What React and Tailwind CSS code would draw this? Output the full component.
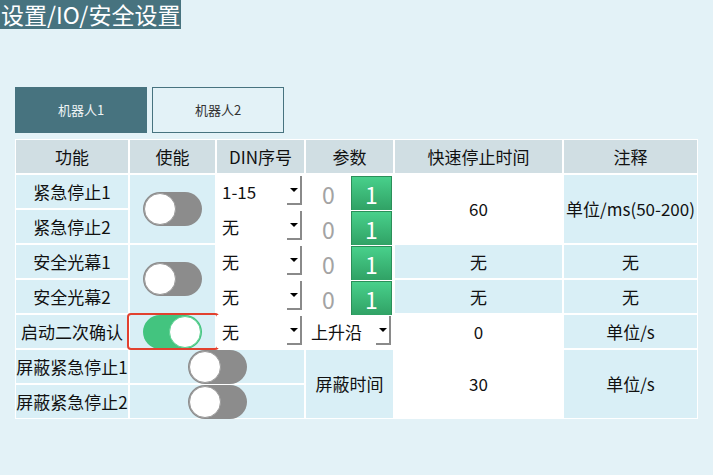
const cell = 'flex items-center justify-center bg-[#d9eff6] text-[17px] text-[#111]'
const head = 'flex items-center justify-center bg-[#d0dee3] text-[17px] text-[#111]'

function Toggle({ on }) {
  return (
    <div className={`relative w-[59px] h-[34px] rounded-full ${on ? 'bg-[#43c47f]' : 'bg-[#8c8c8c]'}`}>
      <div className={`absolute top-[1px] w-[32px] h-[32px] rounded-full bg-white border ${on ? 'right-[1px] border-[#5fd193]' : 'left-[1px] border-[#9a9a9a]'}`} />
    </div>
  )
}

function Select({ value }) {
  return (
    <div className="relative flex items-center bg-white text-[17px] text-[#111] pl-[5px]">
      {value}
      <div className="absolute right-[2px] top-[1px] bottom-[3px] w-[15px] flex items-center justify-center border-r-2 border-b-2 border-[#8a8a8a]">
        <div className="w-0 h-0 border-l-[4px] border-r-[4px] border-t-[4px] border-l-transparent border-r-transparent border-t-black" />
      </div>
    </div>
  )
}

function Param() {
  return (
    <div className="flex bg-white">
      <div className="flex-1 flex items-center justify-center text-[23px] text-[#a3a3a3]">0</div>
      <div className="w-[41px] my-[1px] mr-[1px] flex items-center justify-center text-[23px] text-white bg-gradient-to-b from-[#48d08b] to-[#2f9f63] border border-[#2b8f59]">1</div>
    </div>
  )
}

export default function App() {
  return (
    <div className="w-[713px] h-[475px] bg-[#e3f2f7] font-['Noto_Sans_CJK_SC',sans-serif] overflow-hidden">
      {/* Title */}
      <div className="w-fit h-[29px] bg-[#47737f] text-white text-[23px] leading-[29px] px-[1px] whitespace-nowrap">
        设置/IO/安全设置
      </div>

      {/* Tabs */}
      <div className="flex gap-[5px] ml-[15px] mt-[58px]">
        <div className="w-[132px] h-[46px] flex items-center justify-center bg-[#47737f] text-[13px] text-[#eef4f5]">机器人1</div>
        <div className="w-[132px] h-[46px] flex items-center justify-center border border-[#47737f] text-[13px] text-[#333]">机器人2</div>
      </div>

      {/* Table */}
      <div className="ml-[15px] mt-[6px] w-fit bg-white p-[1px] grid grid-cols-[112px_85px_87px_87px_167px_133px] grid-rows-[repeat(8,33px)] gap-[2px]">
        <div className={`${head} col-start-1 row-start-1`}>功能</div>
        <div className={`${head} col-start-2 row-start-1`}>使能</div>
        <div className={`${head} col-start-3 row-start-1`}>DIN序号</div>
        <div className={`${head} col-start-4 row-start-1`}>参数</div>
        <div className={`${head} col-start-5 row-start-1`}>快速停止时间</div>
        <div className={`${head} col-start-6 row-start-1`}>注释</div>

        <div className={`${cell} col-start-1 row-start-2`}>紧急停止1</div>
        <div className={`${cell} col-start-1 row-start-3`}>紧急停止2</div>
        <div className={`${cell} col-start-1 row-start-4`}>安全光幕1</div>
        <div className={`${cell} col-start-1 row-start-5`}>安全光幕2</div>
        <div className={`${cell} col-start-1 row-start-6`}>启动二次确认</div>
        <div className={`${cell} col-start-1 row-start-7 whitespace-nowrap`}>屏蔽紧急停止1</div>
        <div className={`${cell} col-start-1 row-start-8 whitespace-nowrap`}>屏蔽紧急停止2</div>

        <div className={`${cell} col-start-2 row-start-2 row-span-2`}><Toggle /></div>
        <div className={`${cell} col-start-2 row-start-4 row-span-2`}><Toggle /></div>
        <div className={`${cell} relative col-start-2 row-start-6`}>
          <Toggle on />
          <div className="absolute -left-[3px] -right-[4px] -top-[2px] -bottom-[2px] border-2 border-[#e2412f] rounded-[4px]" />
        </div>
        <div className={`${cell} col-start-2 col-span-2 row-start-7`}><Toggle /></div>
        <div className={`${cell} col-start-2 col-span-2 row-start-8`}><Toggle /></div>

        <div className="col-start-3 row-start-2 grid"><Select value="1-15" /></div>
        <div className="col-start-3 row-start-3 grid"><Select value="无" /></div>
        <div className="col-start-3 row-start-4 grid"><Select value="无" /></div>
        <div className="col-start-3 row-start-5 grid"><Select value="无" /></div>
        <div className="col-start-3 row-start-6 grid"><Select value="无" /></div>

        <div className="col-start-4 row-start-2 grid"><Param /></div>
        <div className="col-start-4 row-start-3 grid"><Param /></div>
        <div className="col-start-4 row-start-4 grid"><Param /></div>
        <div className="col-start-4 row-start-5 grid"><Param /></div>
        <div className="col-start-4 row-start-6 grid"><Select value="上升沿" /></div>
        <div className={`${cell} col-start-4 row-start-7 row-span-2`}>屏蔽时间</div>

        <div className={`${cell} !bg-white col-start-5 row-start-2 row-span-2`}>60</div>
        <div className={`${cell} col-start-5 row-start-4`}>无</div>
        <div className={`${cell} col-start-5 row-start-5`}>无</div>
        <div className={`${cell} !bg-white col-start-5 row-start-6`}>0</div>
        <div className={`${cell} !bg-white col-start-5 row-start-7 row-span-2`}>30</div>

        <div className={`${cell} col-start-6 row-start-2 row-span-2 whitespace-nowrap`}>单位/ms(50-200)</div>
        <div className={`${cell} col-start-6 row-start-4`}>无</div>
        <div className={`${cell} col-start-6 row-start-5`}>无</div>
        <div className={`${cell} col-start-6 row-start-6`}>单位/s</div>
        <div className={`${cell} col-start-6 row-start-7 row-span-2`}>单位/s</div>
      </div>
    </div>
  )
}
